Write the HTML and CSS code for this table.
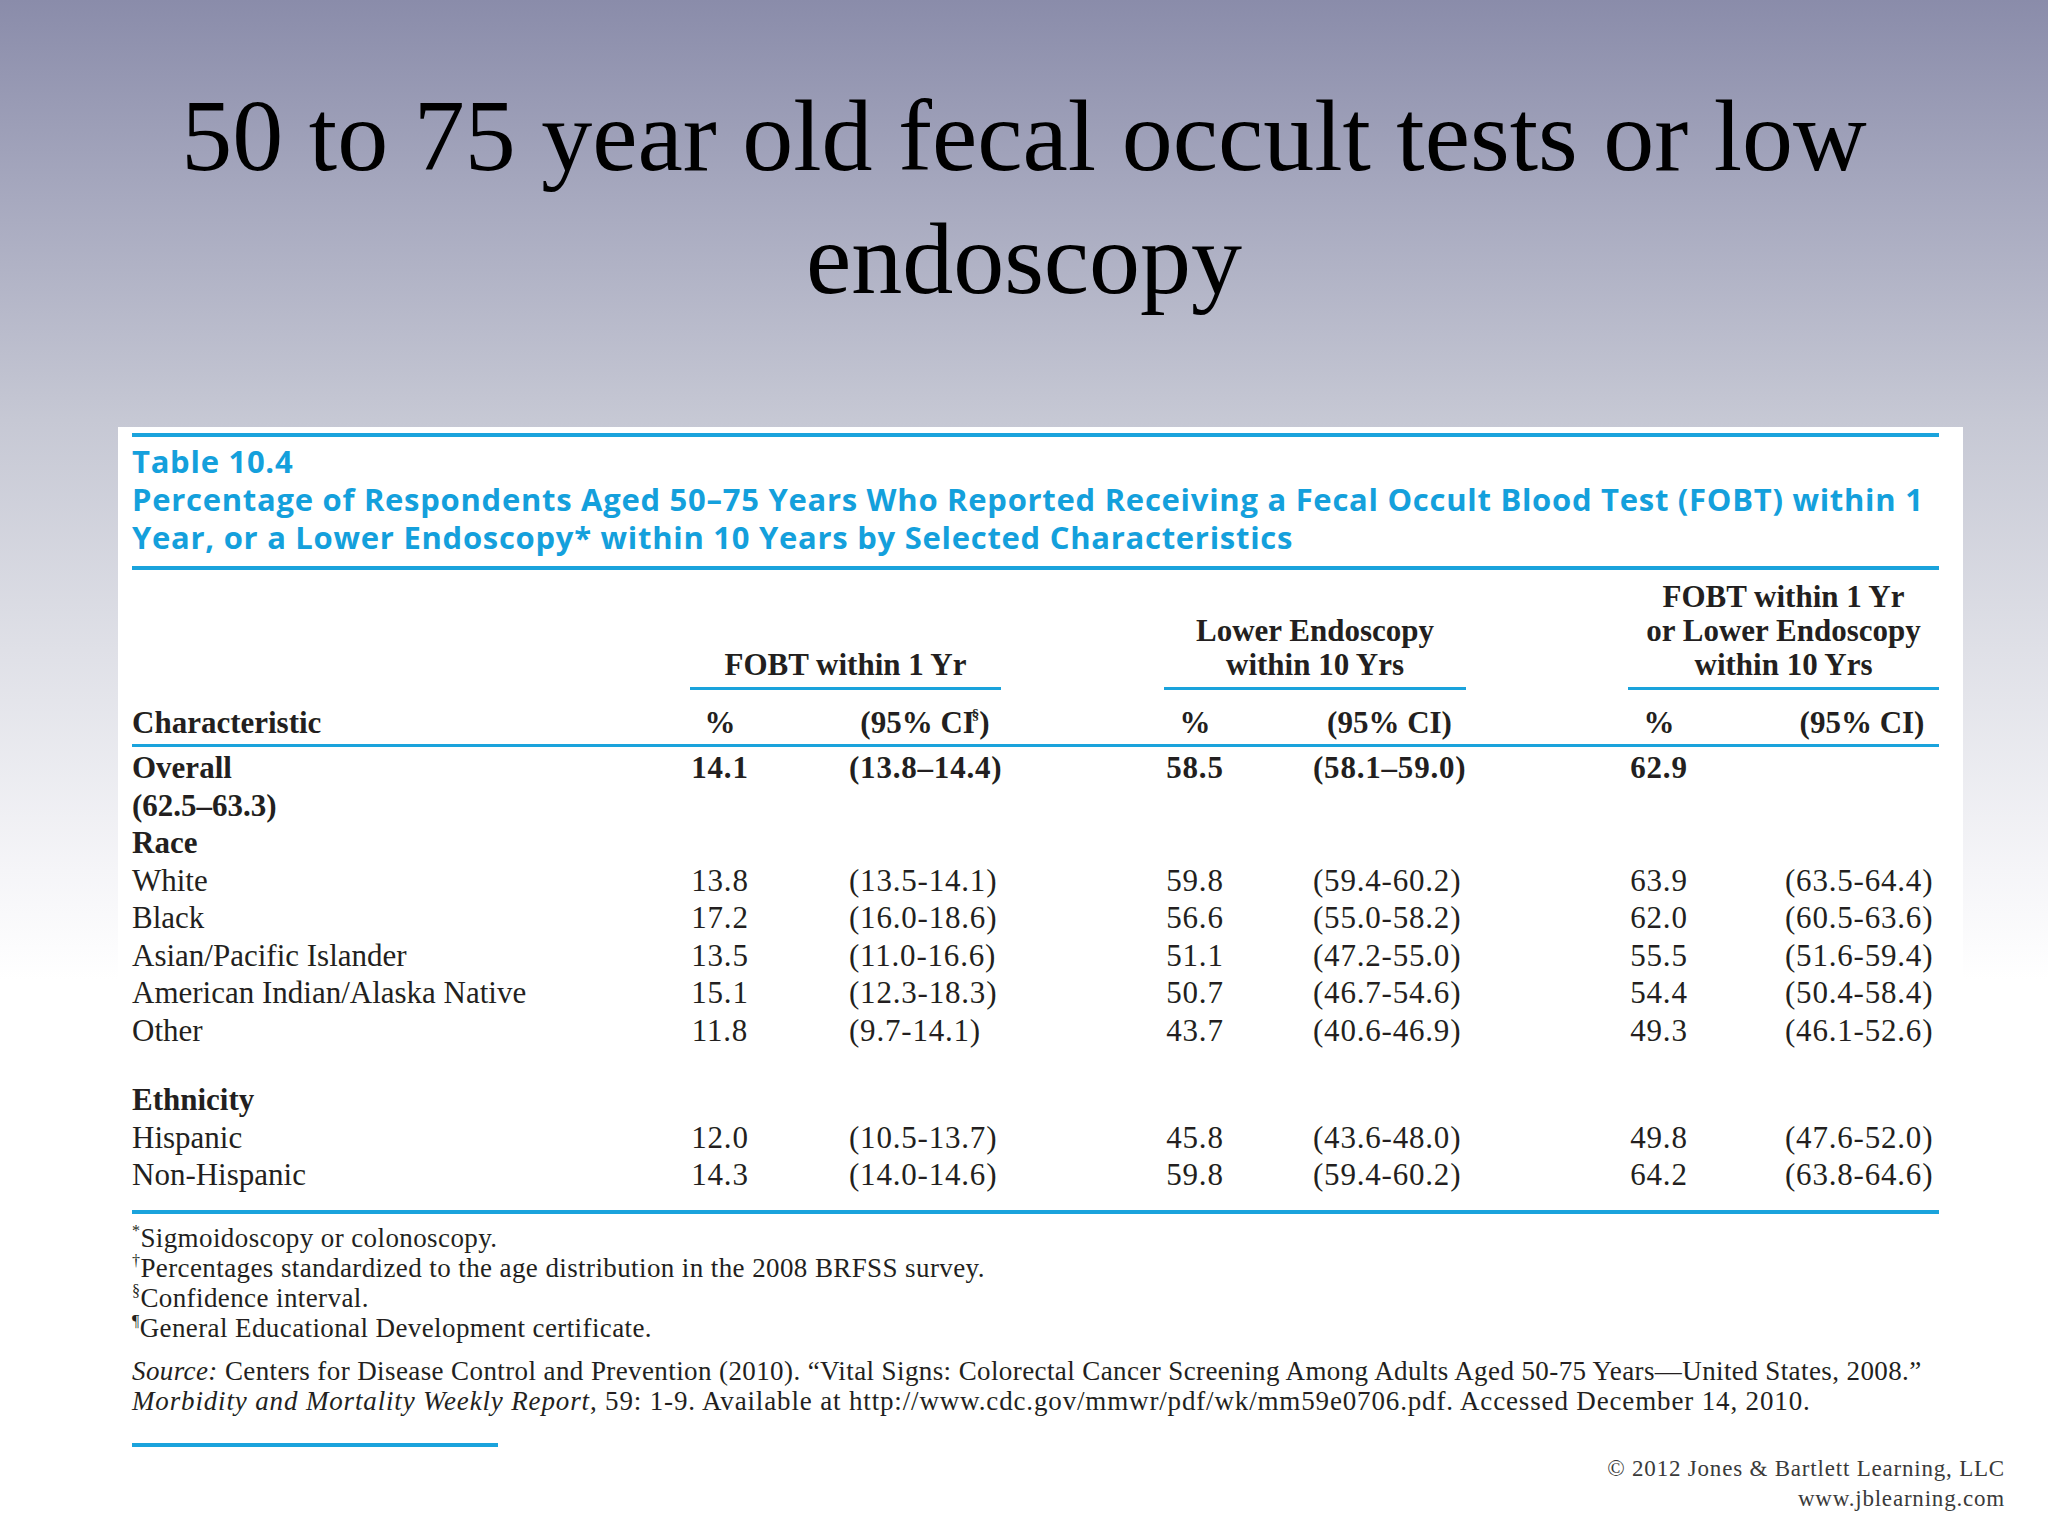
FILE: index.html
```html
<!DOCTYPE html>
<html lang="en">
<head>
<meta charset="utf-8">
<title>50 to 75 year old fecal occult tests or low endoscopy</title>
<link rel="stylesheet" href="styles.css">
</head>
<body>
<div class="slide">
  <h1 class="title">50 to 75 year old fecal occult tests or low<br>endoscopy</h1>
  <div class="card">
    <div class="caption">
      <div>Table 10.4</div>
      <div>Percentage of Respondents Aged 50–75 Years Who Reported Receiving a Fecal Occult Blood Test (FOBT) within 1</div>
      <div>Year, or a Lower Endoscopy* within 10 Years by Selected Characteristics</div>
    </div>
    <div class="row groups">
      <div class="g g1">FOBT within 1 Yr</div>
      <div class="g g2">Lower Endoscopy<br>within 10 Yrs</div>
      <div class="g g3">FOBT within 1 Yr<br>or Lower Endoscopy<br>within 10 Yrs</div>
    </div>
    <div class="row subhead">
      <div class="c0">Characteristic</div>
      <div class="p p1">%</div>
      <div class="ci ci1">(95% CI<sup class="sec">§</sup>)</div>
      <div class="p p2">%</div>
      <div class="ci ci2">(95% CI)</div>
      <div class="p p3">%</div>
      <div class="ci ci3">(95% CI)</div>
    </div>
    <div class="tbody">
      <div class="row bold">
        <div class="c0">Overall</div>
        <div class="p p1 num">14.1</div>
        <div class="ci ci1 num">(13.8–14.4)</div>
        <div class="p p2 num">58.5</div>
        <div class="ci ci2 num">(58.1–59.0)</div>
        <div class="p p3 num">62.9</div>
      </div>
      <div class="row bold"><div class="c0">(62.5–63.3)</div></div>
      <div class="row bold"><div class="c0">Race</div></div>
      <div class="row">
        <div class="c0">White</div>
        <div class="p p1 num">13.8</div><div class="ci ci1 num">(13.5-14.1)</div>
        <div class="p p2 num">59.8</div><div class="ci ci2 num">(59.4-60.2)</div>
        <div class="p p3 num">63.9</div><div class="ci ci3 num">(63.5-64.4)</div>
      </div>
      <div class="row">
        <div class="c0">Black</div>
        <div class="p p1 num">17.2</div><div class="ci ci1 num">(16.0-18.6)</div>
        <div class="p p2 num">56.6</div><div class="ci ci2 num">(55.0-58.2)</div>
        <div class="p p3 num">62.0</div><div class="ci ci3 num">(60.5-63.6)</div>
      </div>
      <div class="row">
        <div class="c0">Asian/Pacific Islander</div>
        <div class="p p1 num">13.5</div><div class="ci ci1 num">(11.0-16.6)</div>
        <div class="p p2 num">51.1</div><div class="ci ci2 num">(47.2-55.0)</div>
        <div class="p p3 num">55.5</div><div class="ci ci3 num">(51.6-59.4)</div>
      </div>
      <div class="row">
        <div class="c0">American Indian/Alaska Native</div>
        <div class="p p1 num">15.1</div><div class="ci ci1 num">(12.3-18.3)</div>
        <div class="p p2 num">50.7</div><div class="ci ci2 num">(46.7-54.6)</div>
        <div class="p p3 num">54.4</div><div class="ci ci3 num">(50.4-58.4)</div>
      </div>
      <div class="row">
        <div class="c0">Other</div>
        <div class="p p1 num">11.8</div><div class="ci ci1 num">(9.7-14.1)</div>
        <div class="p p2 num">43.7</div><div class="ci ci2 num">(40.6-46.9)</div>
        <div class="p p3 num">49.3</div><div class="ci ci3 num">(46.1-52.6)</div>
      </div>
      <div class="spacer"></div>
      <div class="row bold"><div class="c0">Ethnicity</div></div>
      <div class="row">
        <div class="c0">Hispanic</div>
        <div class="p p1 num">12.0</div><div class="ci ci1 num">(10.5-13.7)</div>
        <div class="p p2 num">45.8</div><div class="ci ci2 num">(43.6-48.0)</div>
        <div class="p p3 num">49.8</div><div class="ci ci3 num">(47.6-52.0)</div>
      </div>
      <div class="row">
        <div class="c0">Non-Hispanic</div>
        <div class="p p1 num">14.3</div><div class="ci ci1 num">(14.0-14.6)</div>
        <div class="p p2 num">59.8</div><div class="ci ci2 num">(59.4-60.2)</div>
        <div class="p p3 num">64.2</div><div class="ci ci3 num">(63.8-64.6)</div>
      </div>
    </div>
    <div class="notes">
      <div><sup class="mark">*</sup>Sigmoidoscopy or colonoscopy.</div>
      <div><sup class="mark">†</sup>Percentages standardized to the age distribution in the 2008 BRFSS survey.</div>
      <div><sup class="mark">§</sup>Confidence interval.</div>
      <div><sup class="mark">¶</sup>General Educational Development certificate.</div>
    </div>
    <div class="source">
      <div><em>Source:</em> Centers for Disease Control and Prevention (2010). “Vital Signs: Colorectal Cancer Screening Among Adults Aged 50-75 Years—United States, 2008.”</div>
      <div class="source2"><em>Morbidity and Mortality Weekly Report</em>, 59: 1-9. Available at http://www.cdc.gov/mmwr/pdf/wk/mm59e0706.pdf. Accessed December 14, 2010.</div>
    </div>
    <div class="shortrule"></div>
  </div>
  <div class="copyright">
    <div>© 2012 Jones &amp; Bartlett Learning, LLC</div>
    <div>www.jblearning.com</div>
  </div>
</div>
</body>
</html>
```

FILE: styles.css
```css
html, body {
  margin: 0;
  padding: 0;
}

.slide {
  position: relative;
  width: 2048px;
  height: 1536px;
  overflow: hidden;
  display: flex;
  flex-direction: column;
  background: linear-gradient(to bottom,
    #8a8caa 0px,
    #a7a9bf 200px,
    #c6c8d4 420px,
    #dfe0e7 650px,
    #f5f5f8 870px,
    #ffffff 980px,
    #ffffff 1536px);
}

.title {
  margin: 0;
  padding-top: 74px;
  font-family: "Liberation Serif", "Times New Roman", serif;
  font-weight: 400;
  font-size: 102px;
  line-height: 123px;
  text-align: center;
  color: #000;
}

.card {
  flex: 1;
  margin: 107px 0 0 118px;
  width: 1845px;
  box-sizing: border-box;
  padding: 6px 24px 0 14px;
  background: #fff;
  color: #231f20;
  font-family: "Liberation Serif", "Times New Roman", serif;
}

.caption {
  border-top: 4px solid #1aa3dc;
  border-bottom: 4px solid #1aa3dc;
  padding: 5px 0 10px;
  font-family: "Open Sans", Lato, sans-serif;
  font-weight: 700;
  font-size: 31px;
  line-height: 38px;
  letter-spacing: 0.72px;
  color: #14a0dc;
  white-space: nowrap;
}

.row {
  display: grid;
  grid-template-columns: 558px 60px 251px 163px 62px 240px 162px 62px 249px;
}

.groups {
  padding-top: 10px;
  align-items: end;
  font-weight: 700;
  font-size: 31px;
  line-height: 34px;
}

.g {
  text-align: center;
  border-bottom: 3px solid #1aa3dc;
  padding-bottom: 5px;
}

.g1 { grid-column: 2 / 4; }
.g2 { grid-column: 5 / 7; }
.g3 { grid-column: 8 / 10; }

.c0 { grid-column: 1; white-space: nowrap; }
.p1 { grid-column: 2; }
.ci1 { grid-column: 3; padding-left: 99px; }
.p2 { grid-column: 5; }
.ci2 { grid-column: 6; padding-left: 87px; }
.p3 { grid-column: 8; }
.ci3 { grid-column: 9; padding-left: 95px; }

.p { text-align: center; }
.ci { white-space: nowrap; }

.subhead {
  margin-top: 14px;
  padding-bottom: 2.5px;
  border-bottom: 3px solid #1aa3dc;
  font-weight: 700;
  font-size: 31px;
  line-height: 37.5px;
}

.subhead .ci { text-align: center; }

.sec {
  font-size: 15px;
  line-height: 0;
  vertical-align: 14px;
  margin-left: -3px;
}

.tbody {
  padding-top: 2px;
  padding-bottom: 16.5px;
  border-bottom: 4px solid #1aa3dc;
  font-size: 31px;
  line-height: 37.5px;
}

.tbody .row.bold { font-weight: 700; }

.num { letter-spacing: 0.8px; }

.spacer { height: 32px; }

.notes {
  padding-top: 9px;
  font-size: 27px;
  line-height: 30px;
  letter-spacing: 0.4px;
}

.mark {
  font-size: 16px;
  line-height: 0;
  vertical-align: 11px;
}

.source {
  margin-top: 13px;
  font-size: 27px;
  line-height: 30px;
  letter-spacing: 0.4px;
  white-space: nowrap;
}

.source2 {
  letter-spacing: 0.85px;
}

.shortrule {
  margin-top: 27px;
  width: 366px;
  height: 4px;
  background: #1aa3dc;
}

.copyright {
  position: absolute;
  right: 43px;
  top: 1454px;
  text-align: right;
  font-family: "Liberation Serif", "Times New Roman", serif;
  font-size: 23px;
  line-height: 30px;
  color: #3a3a3a;
  letter-spacing: 0.8px;
}
```
